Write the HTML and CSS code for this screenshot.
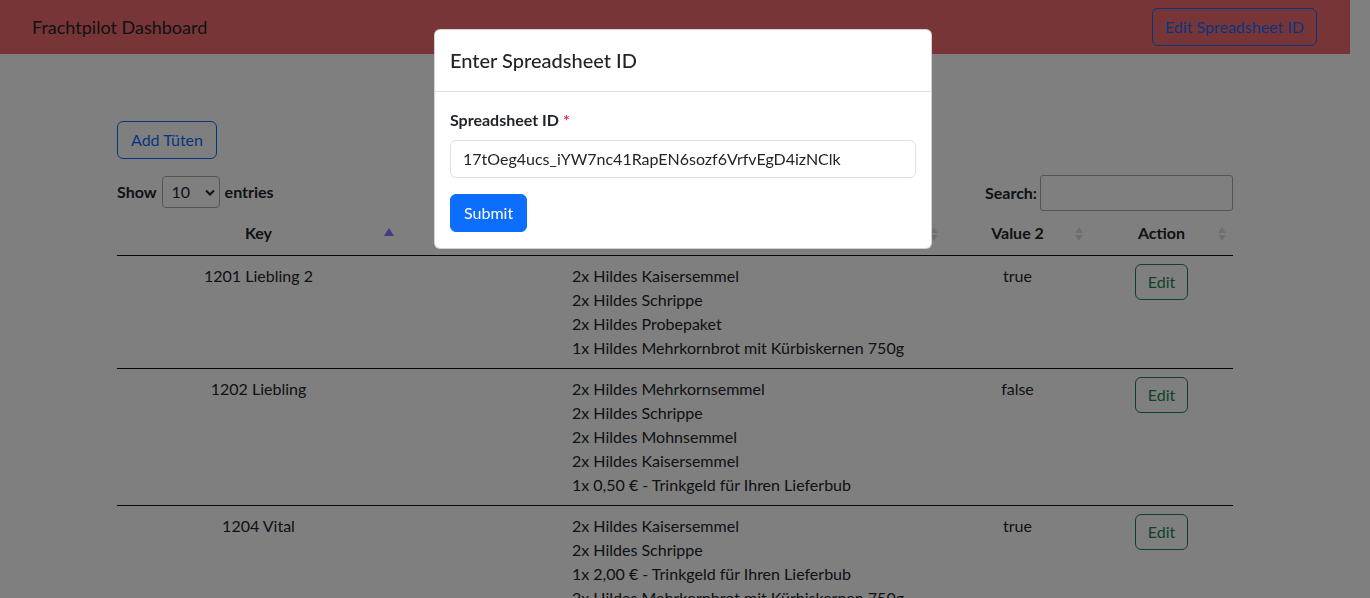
FILE: index.html
```html
<!DOCTYPE html>
<html lang="de">
<head>
<meta charset="utf-8">
<title>Frachtpilot Dashboard</title>
<link rel="stylesheet" href="styles.css">
</head>
<body>
<div class="page">
  <nav class="navbar">
    <span class="brand">Frachtpilot Dashboard</span>
    <button class="btn btn-outline-primary">Edit Spreadsheet ID</button>
  </nav>

  <main class="container">
    <button class="btn btn-outline-primary add-btn">Add Tüten</button>

    <div class="dt-controls">
      <label class="dt-length">Show
        <span class="select">10<svg width="10" height="7" viewBox="0 0 10 7"><path d="M1 1.5l4 4 4-4" fill="none" stroke="#212529" stroke-width="2"/></svg></span>
        entries</label>
      <label class="dt-search">Search: <span class="search-input"></span></label>
    </div>

    <table class="dt-table">
      <colgroup>
        <col class="c1"><col class="c2"><col class="c3"><col class="c4">
      </colgroup>
      <thead>
        <tr>
          <th class="sorted-asc">Key</th>
          <th class="sortable">Value 1</th>
          <th class="sortable">Value 2</th>
          <th class="sortable">Action</th>
        </tr>
      </thead>
      <tbody>
        <tr>
          <td>1201 Liebling 2</td>
          <td class="items">2x Hildes Kaisersemmel<br>2x Hildes Schrippe<br>2x Hildes Probepaket<br>1x Hildes Mehrkornbrot mit Kürbiskernen 750g</td>
          <td>true</td>
          <td><button class="btn btn-outline-success">Edit</button></td>
        </tr>
        <tr>
          <td>1202 Liebling</td>
          <td class="items">2x Hildes Mehrkornsemmel<br>2x Hildes Schrippe<br>2x Hildes Mohnsemmel<br>2x Hildes Kaisersemmel<br>1x 0,50 € - Trinkgeld für Ihren Lieferbub</td>
          <td>false</td>
          <td><button class="btn btn-outline-success">Edit</button></td>
        </tr>
        <tr>
          <td>1204 Vital</td>
          <td class="items">2x Hildes Kaisersemmel<br>2x Hildes Schrippe<br>1x 2,00 € - Trinkgeld für Ihren Lieferbub<br>2x Hildes Mehrkornbrot mit Kürbiskernen 750g</td>
          <td>true</td>
          <td><button class="btn btn-outline-success">Edit</button></td>
        </tr>
      </tbody>
    </table>
  </main>
</div>

<div class="backdrop"></div>
<div class="modal">
  <div class="modal-header">
    <h5 class="modal-title">Enter Spreadsheet ID</h5>
  </div>
  <div class="modal-body">
    <label class="form-label">Spreadsheet ID <span class="req">*</span></label>
    <div class="form-control">17tOeg4ucs_iYW7nc41RapEN6sozf6VrfvEgD4izNClk</div>
    <button class="btn btn-primary">Submit</button>
  </div>
</div>
</body>
</html>
```

FILE: styles.css
```css
html, body {
  margin: 0;
  height: 100%;
  overflow: hidden;
}
body {
  font-family: "Lato", "Liberation Sans", sans-serif;
  font-size: 16px;
  line-height: 24px;
  color: #212529;
  background: #fff;
}
.page {
  margin-right: 20px;
}
.navbar {
  display: flex;
  align-items: center;
  justify-content: space-between;
  height: 54px;
  padding: 0 33px 0 32px;
  background: #ef6b6f;
  box-sizing: border-box;
}
.brand {
  font-size: 18px;
  line-height: 28px;
  color: #212529;
}
.btn {
  font-family: inherit;
  font-size: 16px;
  line-height: 24px;
  padding: 6px 12px;
  border-radius: 6px;
  border: 1px solid transparent;
  background: transparent;
  cursor: pointer;
}
.btn-outline-primary {
  color: #0d6efd;
  border-color: #0d6efd;
}
.btn-outline-success {
  color: #198754;
  border-color: #198754;
  padding: 5px 12px;
}
.btn-primary {
  color: #fff;
  background: #0d6efd;
  border-color: #0d6efd;
}
.container {
  width: 1116px;
  margin: 0 auto;
}
.add-btn {
  margin-top: 67px;
  padding: 6px 13px;
}
.dt-controls {
  display: flex;
  justify-content: space-between;
  align-items: center;
  margin-top: 16px;
  height: 36px;
  font-weight: 700;
}
.dt-length {
  display: flex;
  align-items: center;
  gap: 5px;
  margin-top: -2px;
}
.select {
  display: inline-flex;
  align-items: center;
  justify-content: space-between;
  box-sizing: border-box;
  width: 58px;
  height: 32px;
  padding: 0 4px 0 9px;
  border: 1px solid #aaa;
  border-radius: 4px;
  font-weight: 400;
  background: #fff;
}
.dt-search {
  display: flex;
  align-items: center;
  gap: 3px;
}
.search-input {
  display: block;
  box-sizing: border-box;
  width: 193px;
  height: 36px;
  border: 1px solid #aaa;
  border-radius: 3px;
  background: #fff;
}
.dt-table {
  width: 100%;
  border-collapse: collapse;
  table-layout: fixed;
}
.c1 { width: 283px; }
.c2 { width: 545px; }
.c3 { width: 145px; }
.c4 { width: 143px; }
.dt-table th {
  position: relative;
  padding: 10px 18px;
  font-weight: 700;
  text-align: center;
  border-bottom: 1px solid #111;
}
.dt-table th.sortable::before,
.dt-table th.sortable::after,
.dt-table th.sorted-asc::before {
  content: "";
  position: absolute;
  right: 7px;
  width: 0;
  height: 0;
  border-left: 4px solid transparent;
  border-right: 4px solid transparent;
}
.dt-table th.sortable::before {
  top: 16px;
  border-bottom: 6px solid rgba(0, 0, 0, 0.13);
}
.dt-table th.sortable::after {
  top: 24px;
  border-top: 6px solid rgba(0, 0, 0, 0.13);
}
.dt-table th.sorted-asc::before {
  top: 17px;
  right: 6px;
  border-left-width: 5px;
  border-right-width: 5px;
  border-bottom: 8px solid #7a7aff;
}
.dt-table td {
  padding: 8px 10px;
  text-align: center;
  vertical-align: top;
  border-top: 1px solid #111;
}
.dt-table tbody tr:first-child td {
  border-top: none;
}
.dt-table td.items {
  text-align: left;
  padding-left: 172px;
}
.backdrop {
  position: fixed;
  inset: 0;
  background: rgba(0, 0, 0, 0.5);
}
.modal {
  position: fixed;
  top: 29px;
  left: 434px;
  width: 498px;
  box-sizing: border-box;
  background: #fff;
  border: 1px solid rgba(0, 0, 0, 0.175);
  border-radius: 6px;
}
.modal-header {
  padding: 15px 16px 16px 15px;
  border-bottom: 1px solid #dee2e6;
}
.modal-title {
  margin: 0;
  font-size: 20px;
  line-height: 30px;
  font-weight: 500;
}
.modal-body {
  padding: 16px 15px;
}
.form-label {
  display: block;
  font-weight: 700;
  margin-bottom: 8px;
}
.req {
  color: #dc3545;
}
.form-control {
  box-sizing: border-box;
  height: 38px;
  padding: 6px 12px;
  border: 1px solid #dee2e6;
  border-radius: 6px;
  margin-bottom: 16px;
}
.btn-primary {
  padding: 6px 13px;
}
```
